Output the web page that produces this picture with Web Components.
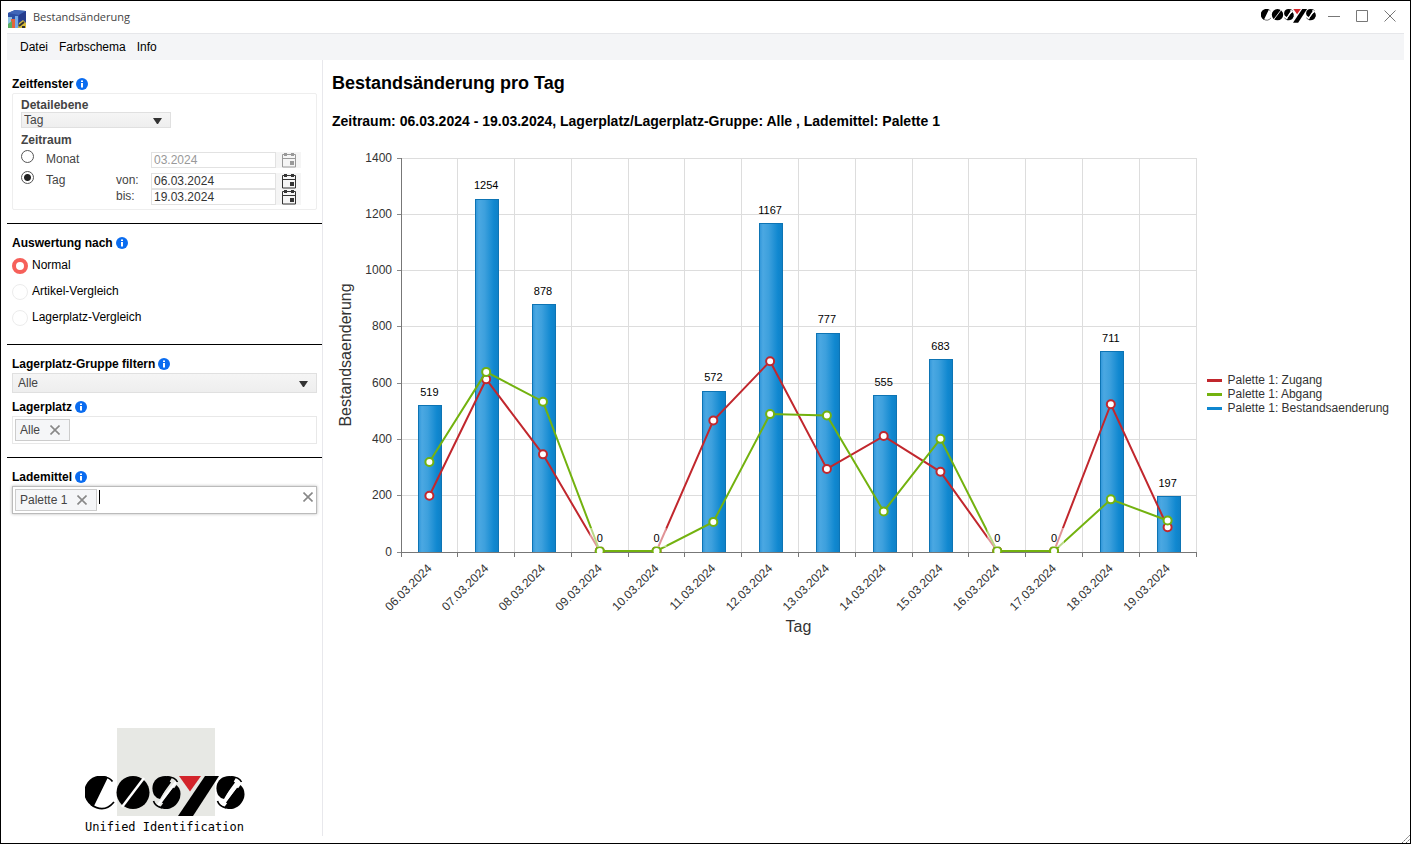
<!DOCTYPE html>
<html lang="de">
<head>
<meta charset="utf-8">
<title>Bestandsänderung</title>
<style>
  body { margin: 0; font: 12px/16px "Liberation Sans", Arial, sans-serif; color: #000; background: #fff; }
</style>
</head>
<body>
<app-window>
  <title-bar slot="title" caption="Bestandsänderung"></title-bar>
  <menu-bar slot="menu"></menu-bar>
  <side-section slot="side"><period-filter></period-filter></side-section>
  <side-section slot="side"><mode-filter></mode-filter></side-section>
  <side-section slot="side">
    <select-field label="Lagerplatz-Gruppe filtern" value="Alle"></select-field>
    <chip-field label="Lagerplatz" chip="Alle"></chip-field>
  </side-section>
  <side-section slot="side" last><chip-field label="Lademittel" chip="Palette 1" active></chip-field></side-section>
  <brand-footer slot="footer"></brand-footer>
  <report-view></report-view>
</app-window>

<script>
const define = (name, html, setup) => {
  const template = document.createElement('template');
  template.innerHTML = `<style>*{box-sizing:border-box}:host{display:block;box-sizing:border-box}
    button,input,select{font:inherit;color:inherit;margin:0}button{border:0;background:none;padding:0}</style>` + html;
  customElements.define(name, class extends HTMLElement {
    connectedCallback() {
      if (this.shadowRoot) return;
      const root = this.attachShadow({ mode: 'open' });
      root.append(template.content.cloneNode(true));
      if (setup) setup(this, root);
    }
  });
};

define('cosys-mark', `<style>
  svg{display:block;width:100%;height:auto}</style>
  <svg viewBox="0 0 160 40" aria-label="COSYS" role="img">
    <path d="M23 1.300A16.500 16.500 0 0 0 8.500 31Z"/>
    <path d="M16 .8Q24 .5 27.500 5.500M6 28.500Q19 38 29 26" fill="none" stroke="#000" stroke-width="1.600"/>
    <circle cx="48" cy="16.500" r="16.500"/>
    <path d="M59 2 37 31" stroke="#fff" stroke-width="2.500"/>
    <g id="s">
      <path d="M87 1.500Q81 -1 75 1C67 4 66 13 69 19Q71 22 75 23Z"/>
      <path d="M91.500 9Q97 14 95 22C91 33 81 35 75 31.500Z"/>
      <path d="M82 .8Q90 1 92.500 6M68.500 25Q70 30 77 32" fill="none" stroke="#000" stroke-width="1.600"/>
      <path d="M84 5 73 20M90 13 79 28" stroke="#000" stroke-width="5"/>
      <path d="M91 6 73 29" stroke="#fff" stroke-width="2.200"/>
    </g>
    <use href="#s" x="64"/>
    <path d="M94 0H116L105 15.500Z" fill="#d3242b"/>
    <path d="M120 0H134L108 40H93Z"/>
  </svg>`);

define('title-bar', `<style>
  :host{display:flex;align-items:center;height:33px;border-bottom:1px solid #e6e7ea}
  .icon{width:20px;height:20px;flex:none;margin-top:4px}
  h1{flex:1;margin:0 0 0 6px;font:11px/16px "Open Sans","Noto Sans",sans-serif;color:#444}
  .tools{display:flex;align-items:center;align-self:start;height:30px;gap:0}
  cosys-mark{width:55px;margin-right:4px}
  button{width:28px;height:28px;display:grid;place-items:center}
  </style>
  <svg class="icon" viewBox="0 0 20 20"><path d="M1 4 8 1l11 1v14l-6 3H1Z" fill="#2b4fa4"/><path d="M1 4 8 1l11 1-7 4Z" fill="#4066b8"/><path d="M12 6l7-4v14l-7 3Z" fill="#263d8e"/><path d="M1 8h4v11H1Z" fill="#8fc3e4"/><path d="M4 10h4v9H4Z" fill="#e2643c"/><path d="M8 7h3v12H8Z" fill="#74a9e8"/><path d="M1 15l4-3v7H1Z" fill="#58ad61"/><path d="M12 14l4-3 3 3v5h-8Z" fill="#d8bd3c"/><path d="M12 17l5-4M15 18h3" stroke="#333" stroke-width="2"/></svg>
  <h1></h1><div class="tools"><cosys-mark></cosys-mark>
  <button aria-label="Minimieren"><svg width="12" height="12"><path d="M0 6.500H12" stroke="#777"/></svg></button>
  <button aria-label="Maximieren"><svg width="12" height="12"><path d="M.5 .5h11v11H.5Z" fill="none" stroke="#777"/></svg></button>
  <button aria-label="Schließen"><svg width="12" height="12"><path d="M.5 .5l11 11m0-11-11 11" stroke="#777"/></svg></button></div>`,
  (el, root) => { root.querySelector('h1').textContent = el.getAttribute('caption'); });

define('menu-bar', `<style>
  nav{display:flex;gap:11px;height:26px;align-items:center;padding-left:13px;background:#f4f5f7}</style>
  <nav><button>Datei</button><button>Farbschema</button><button>Info</button></nav>`);

define('app-window', `<style>
  :host{display:flex;flex-direction:column;min-height:100vh;border:1px solid #000;padding:0 6px 7px;position:relative}
  .body{flex:1;display:flex}
  aside{flex:0 0 316px;display:flex;flex-direction:column;border-right:1px solid #e8e8ec;padding-top:5px}
  main{flex:1;min-width:0}
  .footer{margin-top:auto}
  .grip{position:absolute;right:0;bottom:0}
  </style>
  <slot name="title"></slot><slot name="menu"></slot>
  <div class="body"><aside><slot name="side"></slot><div class="footer"><slot name="footer"></slot></div></aside><main><slot></slot></main></div>
  <svg class="grip" width="8" height="8"><path d="M0 8 8 0M4 8l4-4" stroke="#666" stroke-dasharray="2 1"/></svg>`);

define('side-section', `<style>
  :host{padding:11px 5px 13px;border-bottom:1px solid #000}
  :host([last]){border:0}
  </style><slot></slot>`);

define('info-icon', `<style>:host{display:inline-block;width:12px;height:12px}svg{display:block}</style>
  <svg width="12" height="12"><circle cx="6" cy="6" r="6" fill="#0a6cf0"/><path d="M5 2.500h2v1.500H5ZM5 5h2v4.500H5Z" fill="#fff"/></svg>`);

const labelCss = `.label{display:flex;align-items:center;gap:3px;height:16px;margin-bottom:1px;font-weight:bold}`;
const arrow = `<svg class="arrow" width="9" height="7" viewBox="0 0 9 7"><path d="M0 1H9L5 7H4Z" fill="#333"/></svg>`;
const comboCss = `.combo{display:grid;grid-template-rows:100%;align-items:center;color:#444}
  .combo>*{grid-area:1/1}
  .combo select{appearance:none;width:100%;height:100%;min-height:0;border:1px solid #e0e0e0;border-radius:0;background:linear-gradient(#f5f5f5,#eee);padding:0 20px 0 5px;line-height:14px}
  .arrow{justify-self:end;margin-right:9px;pointer-events:none}`;
const cal = `<svg width="14" height="16" viewBox="0 0 14 16"><path d="M.5 2.500h13v12.500H.5ZM0 6.500h14" fill="none" stroke="currentColor"/><path d="M2 1h3v3H2ZM9 1h3v3H9ZM8 9h4v4H8Z" fill="currentColor"/></svg>`;

define('period-filter', `<style>${labelCss}${comboCss}
  fieldset{margin:0;min-width:0;border:1px solid #eee;border-radius:2px;padding:4px 8px;color:#333}
  .sub{display:block;font-weight:bold;line-height:14px;color:#444}
  .combo{width:150px;height:16px;margin-bottom:5px}
  .combo select{padding-left:2px}
  .grid{display:grid;grid-template-columns:25px 70px 35px 150px;grid-template-rows:21px 16px 16px;margin-top:5px}
  .grid label{line-height:14px;color:#444}
  input[type=radio]{appearance:none;width:13px;height:13px;border:1px solid #555;border-radius:50%;margin-top:-2px}
  input[type=radio]:checked{background:radial-gradient(circle,#222 3px,#fff 4px)}
  .date{display:flex;height:16px}
  .date input{width:125px;border:1px solid #e2e2e2;padding:0 2px;height:16px;background:#fff}
  .date button{flex:1;display:grid;place-items:center;background:#f5f5f5;height:16px}
  .off{color:#999}
  </style>
  <div class="label">Zeitfenster<info-icon></info-icon></div>
  <fieldset>
    <label class="sub" for="level">Detailebene</label>
    <div class="combo"><select id="level"><option>Tag</option></select>${arrow}</div>
    <span class="sub">Zeitraum</span>
    <div class="grid">
      <input type="radio" name="r" id="m"><label for="m">Monat</label><span></span>
      <div class="date off"><input aria-label="Monat" value="03.2024" disabled><button aria-label="Kalender">${cal}</button></div>
      <input type="radio" name="r" id="t" checked><label for="t">Tag</label><label for="from">von:</label>
      <div class="date"><input id="from" value="06.03.2024"><button aria-label="Kalender">${cal}</button></div>
      <span></span><span></span><label for="to">bis:</label>
      <div class="date"><input id="to" value="19.03.2024"><button aria-label="Kalender">${cal}</button></div>
    </div>
  </fieldset>`);

define('mode-filter', `<style>${labelCss}
  .list{display:grid;gap:10px;padding:6px 0 5px}
  .list label{display:flex;gap:4px;height:16px;line-height:15px}
  input{appearance:none;width:16px;height:16px;border:1px solid #ececec;border-radius:50%}
  input:checked{border:4px solid #f6605a}
  </style>
  <div class="label">Auswertung nach<info-icon></info-icon></div>
  <div class="list">
    <label><input type="radio" name="mode" checked>Normal</label>
    <label><input type="radio" name="mode">Artikel-Vergleich</label>
    <label><input type="radio" name="mode">Lagerplatz-Vergleich</label>
  </div>`);

define('select-field', `<style>${labelCss}${comboCss}
  :host{margin-bottom:6px}.combo{height:20px}</style>
  <label class="label" for="f"><span></span><info-icon></info-icon></label>
  <div class="combo"><select id="f"><option></option></select>${arrow}</div>`,
  (el, root) => {
    root.querySelector('span').textContent = el.getAttribute('label');
    root.querySelector('option').textContent = el.getAttribute('value');
  });

const cross = `<svg width="10" height="10" viewBox="0 0 10 10"><path d="M.5 .5l9 9m0-9-9 9" stroke="#888" stroke-width="1.600"/></svg>`;
define('chip-field', `<style>${labelCss}
  .box{display:flex;align-items:center;height:28px;border:1px solid #e8e8e8;padding:2px}
  :host([active]) .box{border-color:#bbb;box-shadow:0 0 3px #bbb}
  .chip{display:flex;align-items:center;gap:10px;height:22px;border:1px solid #ccc;background:#f5f6f8;color:#444;padding:0 9px 0 4px}
  .chip button,.clear{display:grid;place-items:center}
  input{flex:1;min-width:0;border:0;outline:0;padding:0}
  .caret,.clear{display:none}
  :host([active]) .caret{display:block;width:1px;height:14px;background:#000;margin:0 0 6px 2px}
  :host([active]) .clear{display:grid;margin:0 1px 6px 0}
  </style>
  <label class="label" for="f"><span></span><info-icon></info-icon></label>
  <div class="box"><div class="chip"><b style="font-weight:normal"></b><button aria-label="Entfernen">${cross}</button></div>
  <i class="caret"></i><input id="f"><button class="clear" aria-label="Leeren">${cross}</button></div>`,
  (el, root) => {
    root.querySelector('span').textContent = el.getAttribute('label');
    root.querySelector('b').textContent = el.getAttribute('chip');
  });

define('brand-footer', `<style>
  :host{display:grid;justify-items:center;padding-bottom:1px}
  .art{width:160px;padding-top:48px;background:linear-gradient(#e7e8e4,#e7e8e4) 32px 0/98px 88px no-repeat}
  p{margin:3px 0 0;font:12px/16px "DejaVu Sans Mono",monospace;white-space:nowrap}
  </style><div class="art"><cosys-mark></cosys-mark></div><p>Unified Identification</p>`);

define('report-view', `<style>
  :host{padding:11px 15px 0 9px}
  h2{margin:0;font-size:18px;line-height:24px}
  h3{margin:16px 0 13px;font-size:14px;line-height:20px}
  </style>
  <h2>Bestandsänderung pro Tag</h2>
  <h3>Zeitraum: 06.03.2024 - 19.03.2024, Lagerplatz/Lagerplatz-Gruppe: Alle , Lademittel: Palette 1</h3>
  <stock-chart></stock-chart>`);

const days = ['06','07','08','09','10','11','12','13','14','15','16','17','18','19'].map(d => d + '.03.2024');
const change = [519,1254,878,0,0,572,1167,777,555,683,0,0,711,197];
const incoming = [200,614,347,0,0,467,678,295,412,285,0,0,525,88];
const outgoing = [320,640,534,0,0,107,490,485,144,402,0,0,187,112];

function drawChart(width) {
  const left = 69, top = 14, bottom = 408, right = width - 11, max = 1400;
  const step = (right - left) / days.length;
  const X = i => left + step * (i + .5);
  const Y = v => bottom - v / max * (bottom - top);
  const lineY = v => Math.min(Y(v), bottom - 1);
  const snap = n => Math.floor(n) + .5;
  let s = `<defs><linearGradient id="bar"><stop offset="0" stop-color="#2f96da"/><stop offset=".15" stop-color="#4ba8e2"/><stop offset=".4" stop-color="#3da0dd"/><stop offset=".8" stop-color="#1088d0"/><stop offset="1" stop-color="#0f80c6"/></linearGradient>
    <clipPath id="plot"><rect x="${left}" y="${top}" width="${right - left}" height="${bottom - top + 1}"/></clipPath></defs>`;
  for (let v = 0; v <= max; v += 200) {
    const y = snap(Y(v));
    s += `<path d="M${left} ${y}H${right}" stroke="#ddd"/><path d="M${left - 4} ${y}h4" stroke="#888"/>
      <text x="${left - 9}" y="${Math.floor(y) + 4}" text-anchor="end" font-size="12" fill="#333">${v}</text>`;
  }
  for (let i = 1; i <= days.length; i++) s += `<path d="M${snap(left + step * i)} ${top}V${bottom}" stroke="#ddd"/>`;
  change.forEach((v, i) => {
    if (v) { const y = snap(Y(v)); s += `<rect x="${Math.round(X(i) - 11) + .5}" y="${y}" width="23" height="${bottom + .5 - y}" fill="url(#bar)" stroke="#0d74b4"/>`; }
  });
  s += `<path d="M${left + .5} ${top}V${bottom + 5}M${left} ${bottom + .5}H${right + 1}" stroke="#777" fill="none"/>`;
  for (let i = 1; i <= days.length; i++) s += `<path d="M${snap(left + step * i)} ${bottom}v5" stroke="#777"/>`;
  for (const [data, colour] of [[incoming, '#c1272d'], [outgoing, '#73b20f']]) {
    s += `<g clip-path="url(#plot)" fill="none" stroke="${colour}" stroke-width="2"><polyline points="${data.map((v, i) => X(i) + ',' + lineY(v)).join(' ')}"/>
      ${data.map((v, i) => `<circle cx="${X(i)}" cy="${lineY(v)}" r="4" fill="#fff"/>`).join('')}</g>`;
  }
  change.forEach((v, i) => {
    if (!v) s += `<rect x="${X(i) - 10}" y="${Y(v) - 24}" width="20" height="19" fill="#fff" opacity=".5"/>`;
    s += `<text x="${X(i)}" y="${Y(v) - 10}" text-anchor="middle" font-size="11">${v}</text>`;
  });
  days.forEach((d, i) => {
    s += `<text transform="translate(${X(i) + 3} ${bottom + 17}) rotate(-45)" text-anchor="end" font-size="12" fill="#333">${d}</text>`;
  });
  s += `<text transform="translate(19 ${(top + bottom) / 2}) rotate(-90)" text-anchor="middle" font-size="16" fill="#333">Bestandsaenderung</text>
    <text x="${(left + right) / 2}" y="488" text-anchor="middle" font-size="16" fill="#333">Tag</text>`;
  return s;
}

define('stock-chart', `<style>
  :host{display:flex;align-items:center}
  .plot{flex:1;min-width:0;height:500px}
  svg{display:block;width:100%;height:100%}
  ul{list-style:none;margin:0;padding:0;line-height:14px;color:#333;white-space:nowrap}
  li{display:flex;align-items:center;gap:6px}
  li::before{content:"";width:15px;height:3px;background:var(--c)}
  </style>
  <div class="plot"><svg role="img" aria-label="Bestandsaenderung pro Tag"></svg></div>
  <ul><li style="--c:#c1272d">Palette 1: Zugang</li><li style="--c:#73b20f">Palette 1: Abgang</li><li style="--c:#0f86cf">Palette 1: Bestandsaenderung</li></ul>`,
  (el, root) => {
    const plot = root.querySelector('.plot'), svg = root.querySelector('svg');
    const draw = () => { svg.innerHTML = drawChart(plot.clientWidth); };
    draw();
    new ResizeObserver(draw).observe(plot);
  });
</script>
</body>
</html>
